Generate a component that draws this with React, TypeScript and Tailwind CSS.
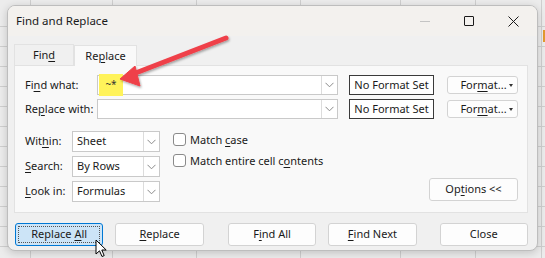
import React from 'react';

const FONT = { fontFamily: '"Noto Sans", "Open Sans", sans-serif' };

function U({ children }: { children: React.ReactNode }) {
  return <span className="underline underline-offset-2 decoration-1">{children}</span>;
}

function Chevron() {
  return (
    <svg width="9" height="6" viewBox="0 0 9 6" className="text-[#8a8a8a]">
      <path d="M0.5 0.8 L4.5 4.8 L8.5 0.8" fill="none" stroke="currentColor" strokeWidth="1" />
    </svg>
  );
}

function Combo({ value, className }: { value?: React.ReactNode; className: string }) {
  return (
    <div className={`flex bg-white border border-[#c9c9c9] ${className}`}>
      <div className="flex-1 flex items-center px-[4px] text-[11px] text-[#1a1a1a]">{value}</div>
      <div className="w-[16px] border-l border-[#dcdcdc] flex items-center justify-center">
        <Chevron />
      </div>
    </div>
  );
}

function Btn({ children, className = '' }: { children: React.ReactNode; className?: string }) {
  return (
    <div
      className={`flex items-center justify-center rounded-[3px] border border-[#d3d3d3] bg-[#fdfdfd] text-[11px] text-[#1a1a1a] ${className}`}
    >
      <span className="whitespace-pre">{children}</span>
    </div>
  );
}

function FormatBtn() {
  return (
    <div className="w-[71px] h-[18px] relative flex items-center justify-center rounded-[3px] border border-[#d3d3d3] bg-[#fdfdfd] text-[11px] text-[#1a1a1a]">
      <span className="ml-[2px]">
        For<U>m</U>at...
      </span>
      <span className="absolute right-[4px] top-[7px] w-0 h-0 border-l-[2.5px] border-r-[2.5px] border-t-[3px] border-l-transparent border-r-transparent border-t-[#333]" />
    </div>
  );
}

function Check({ children }: { children: React.ReactNode }) {
  return (
    <div className="flex items-center h-[13px] gap-[4px]">
      <div className="w-[13px] h-[13px] rounded-[3px] border border-[#8a8a8a] bg-white shrink-0" />
      <span className="text-[11px] text-[#1a1a1a] leading-none whitespace-nowrap">{children}</span>
    </div>
  );
}

function Label({ children, w }: { children: React.ReactNode; w: string }) {
  return <span className={`${w} shrink-0 text-[11px] text-[#1a1a1a] whitespace-nowrap`}>{children}</span>;
}

function Background() {
  const hLines = [26, 46, 66, 86, 106, 126, 146, 166, 186, 206, 226, 246];
  const vLines = [30, 112, 196, 300, 400, 475, 541];
  return (
    <svg className="absolute inset-0" width="545" height="258">
      <rect width="545" height="258" fill="#ececec" />
      {hLines.map((y) => (
        <line key={y} x1="0" x2="545" y1={y + 0.5} y2={y + 0.5} stroke="#cfcfcf" />
      ))}
      {vLines.map((x) => (
        <line key={x} x1={x + 0.5} x2={x + 0.5} y1="0" y2="258" stroke="#cfcfcf" />
      ))}
      <rect x="543" y="30" width="2" height="12" fill="#e39a2f" />
    </svg>
  );
}

function Arrow() {
  return (
    <svg className="absolute inset-0 pointer-events-none" width="545" height="258">
      <defs>
        <filter id="sh" x="-20%" y="-20%" width="140%" height="140%">
          <feDropShadow dx="1" dy="1.5" stdDeviation="1.2" floodColor="#000" floodOpacity="0.35" />
        </filter>
      </defs>
      <g filter="url(#sh)" fill="#ef4149" stroke="#ef4149">
        <line x1="226" y1="38" x2="133" y2="74" strokeWidth="5" strokeLinecap="round" />
        <polygon points="120,79 135,66 140,86" strokeWidth="1" strokeLinejoin="round" />
      </g>
    </svg>
  );
}

function Cursor() {
  return (
    <svg className="absolute left-[95px] top-[239px]" width="14" height="20" viewBox="0 0 14 20">
      <path
        d="M1 1 L1 15 L4.5 11.8 L7 17.5 L9.2 16.6 L6.8 11 L11.2 11 Z"
        fill="#fff"
        stroke="#000"
        strokeWidth="1"
        strokeLinejoin="round"
      />
    </svg>
  );
}

export default function App() {
  return (
    <div className="relative w-[545px] h-[258px] overflow-hidden" style={FONT}>
      <Background />

      <div className="absolute left-[7px] top-[5px] w-[531px] h-[246px] rounded-[8px] border border-[#bdbdbd] bg-[#f0f0f0] shadow-[0_2px_8px_rgba(0,0,0,0.18)] overflow-hidden flex flex-col">
        {/* title bar */}
        <div className="h-[30px] bg-[#f3f1ee] flex items-center pl-[8px] shrink-0">
          <span className="text-[11.5px] text-[#1a1a1a] flex-1">Find and Replace</span>
          <div className="flex items-center h-full">
            <div className="w-[44px] flex justify-center">
              <div className="w-[10px] h-px bg-[#c4c4c4]" />
            </div>
            <div className="w-[44px] flex justify-center">
              <div className="w-[10px] h-[10px] border border-[#1a1a1a] rounded-[1px]" />
            </div>
            <div className="w-[44px] flex justify-center mr-[2px]">
              <svg width="11" height="11" viewBox="0 0 11 11">
                <path d="M0.5 0.5 L10.5 10.5 M10.5 0.5 L0.5 10.5" stroke="#1a1a1a" strokeWidth="1" />
              </svg>
            </div>
          </div>
        </div>

        {/* body */}
        <div className="flex-1 flex flex-col pl-[6px] pr-[9px] pt-[8px]">
          <div className="flex items-end h-[21px]">
            <div className="w-[60px] h-[21px] flex items-center justify-center text-[11px] text-[#1a1a1a] border border-b-0 border-[#e2e2e2] bg-[#f0f0f0]">
              <span>
                Fin<U>d</U>
              </span>
            </div>
            <div className="w-[63px] h-[21px] flex items-center justify-center text-[11px] text-[#1a1a1a] border border-b-0 border-[#e2e2e2] bg-[#f9f9f9] relative z-10 -mb-px">
              <span>
                Re<U>p</U>lace
              </span>
            </div>
          </div>

          <div className="h-[148px] bg-[#f9f9f9] border border-[#e2e2e2] flex flex-col pl-[10px] pr-[9px] pt-[9px] pb-[10px]">
            {/* find what */}
            <div className="flex items-center h-[20px]">
              <Label w="w-[72px]">
                Fi<U>n</U>d what:
              </Label>
              <Combo
                className="w-[241px] h-[20px]"
                value={
                  <span className="-ml-[3px] h-[22px] w-[24px] bg-[#fff35a] flex items-start justify-center pt-[3px] text-[10px] text-[#333]">
                    ~*
                  </span>
                }
              />
              <div className="ml-[11px] w-[85px] h-[20px] border border-[#3a3a3a] bg-white flex items-center justify-center text-[11px] text-[#1a1a1a]">
                No Format Set
              </div>
              <div className="ml-[13px]">
                <FormatBtn />
              </div>
            </div>

            {/* replace with */}
            <div className="flex items-center h-[20px] mt-[4px]">
              <Label w="w-[72px]">
                Re<U>p</U>lace with:
              </Label>
              <Combo className="w-[241px] h-[20px]" />
              <div className="ml-[11px] w-[85px] h-[20px] border border-[#3a3a3a] bg-white flex items-center justify-center text-[11px] text-[#1a1a1a]">
                No Format Set
              </div>
              <div className="ml-[13px]">
                <FormatBtn />
              </div>
            </div>

            {/* options area */}
            <div className="flex mt-[12px] flex-1">
              <div className="flex flex-col gap-[4px]">
                <div className="flex items-center h-[21px]">
                  <Label w="w-[47px]">
                    Wit<U>h</U>in:
                  </Label>
                  <Combo className="w-[88px] h-[21px]" value="Sheet" />
                </div>
                <div className="flex items-center h-[21px]">
                  <Label w="w-[47px]">
                    <U>S</U>earch:
                  </Label>
                  <Combo className="w-[88px] h-[21px]" value="By Rows" />
                </div>
                <div className="flex items-center h-[21px]">
                  <Label w="w-[47px]">
                    <U>L</U>ook in:
                  </Label>
                  <Combo className="w-[88px] h-[21px]" value="Formulas" />
                </div>
              </div>

              <div className="ml-[13px] pt-[2px] flex flex-col gap-[8px]">
                <Check>
                  Match <U>c</U>ase
                </Check>
                <Check>
                  Match entire cell c<U>o</U>ntents
                </Check>
              </div>

              <div className="flex-1 flex items-end justify-end pb-[1px]">
                <Btn className="w-[89px] h-[23px]">
                  Op<U>t</U>ions &lt;&lt;
                </Btn>
              </div>
            </div>
          </div>

          {/* bottom buttons */}
          <div className="flex items-center mt-[10px] gap-[12px] pl-px">
            <div className="w-[89px] h-[23px] rounded-[3px] border border-[#0078d4] bg-[#cce4f7] p-[2px]">
              <div className="w-full h-full border border-dotted border-[#555] flex items-center justify-center text-[11px] text-[#1a1a1a]">
                <span className="whitespace-pre">
                  Replace <U>A</U>ll
                </span>
              </div>
            </div>
            <Btn className="w-[89px] h-[23px]">
              <U>R</U>eplace
            </Btn>
            <Btn className="w-[89px] h-[23px] ml-[12px]">
              F<U>i</U>nd All
            </Btn>
            <Btn className="w-[89px] h-[23px]">
              <U>F</U>ind Next
            </Btn>
            <Btn className="w-[89px] h-[23px] ml-[11px]">Close</Btn>
          </div>
        </div>
      </div>

      <Arrow />
      <Cursor />
    </div>
  );
}
